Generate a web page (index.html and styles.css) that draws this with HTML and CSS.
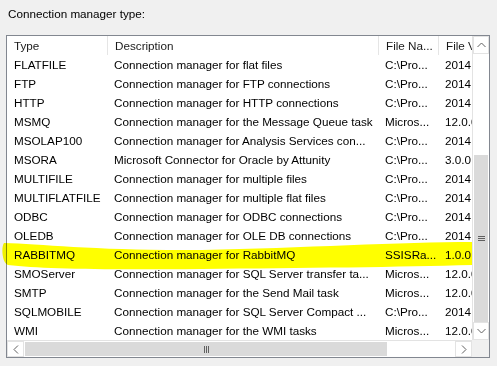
FILE: index.html
```html
<!DOCTYPE html>
<html lang="en">
<head>
    <meta charset="UTF-8">
    <title>Connection manager type</title>
    <link rel="stylesheet" href="styles.css">
</head>
<body>
    <div class="dialog">
        <div class="caption">Connection manager type:</div>
        <div class="listbox">
            <div class="viewport">
                <div class="row header">
                    <div class="cell">Type</div>
                    <div class="cell">Description</div>
                    <div class="cell">File Na...</div>
                    <div class="cell">File Version</div>
                </div>
                <div id="rows"></div>
            </div>
            <div class="vscroll">
                <div class="arrow">
                    <svg width="9" height="6" viewBox="0 0 9 6"><polyline points="0.5,5 4.5,1 8.5,5" /></svg>
                </div>
                <div class="vtrack">
                    <div class="vthumb"><span class="grip-h"></span></div>
                </div>
                <div class="arrow">
                    <svg width="9" height="6" viewBox="0 0 9 6"><polyline points="0.5,1 4.5,5 8.5,1" /></svg>
                </div>
            </div>
            <div class="hscroll">
                <div class="arrow">
                    <svg width="6" height="9" viewBox="0 0 6 9"><polyline points="5,0.5 1,4.5 5,8.5" /></svg>
                </div>
                <div class="htrack">
                    <div class="hthumb"><span class="grip-v"></span></div>
                </div>
                <div class="arrow">
                    <svg width="6" height="9" viewBox="0 0 6 9"><polyline points="1,0.5 5,4.5 1,8.5" /></svg>
                </div>
            </div>
            <div class="corner"></div>

            <!-- marker stroke drawn over the RabbitMQ row -->
            <svg class="marker" width="484" height="40" viewBox="0 0 484 40">
                <path d="M2,5 C40,6 100,13 200,12 C300,10 400,4 470,4 L470,27 C400,29 300,30 200,31 C100,32 40,31 6,27 C0,25 -1,9 2,5 Z" />
            </svg>
        </div>
    </div>

    <script>
        const rows = [
            ['FLATFILE', 'Connection manager for flat files', 'C:\\Pro...', '2014.0.2430.0'],
            ['FTP', 'Connection manager for FTP connections', 'C:\\Pro...', '2014.0.2430.0'],
            ['HTTP', 'Connection manager for HTTP connections', 'C:\\Pro...', '2014.0.2430.0'],
            ['MSMQ', 'Connection manager for the Message Queue task', 'Micros...', '12.0.0.0'],
            ['MSOLAP100', 'Connection manager for Analysis Services con...', 'C:\\Pro...', '2014.0.2430.0'],
            ['MSORA', 'Microsoft Connector for Oracle by Attunity', 'C:\\Pro...', '3.0.0.0'],
            ['MULTIFILE', 'Connection manager for multiple files', 'C:\\Pro...', '2014.0.2430.0'],
            ['MULTIFLATFILE', 'Connection manager for multiple flat files', 'C:\\Pro...', '2014.0.2430.0'],
            ['ODBC', 'Connection manager for ODBC connections', 'C:\\Pro...', '2014.0.2430.0'],
            ['OLEDB', 'Connection manager for OLE DB connections', 'C:\\Pro...', '2014.0.2430.0'],
            ['RABBITMQ', 'Connection manager for RabbitMQ', 'SSISRa...', '1.0.0.0'],
            ['SMOServer', 'Connection manager for SQL Server transfer ta...', 'Micros...', '12.0.0.0'],
            ['SMTP', 'Connection manager for the Send Mail task', 'Micros...', '12.0.0.0'],
            ['SQLMOBILE', 'Connection manager for SQL Server Compact ...', 'C:\\Pro...', '2014.0.2430.0'],
            ['WMI', 'Connection manager for the WMI tasks', 'Micros...', '12.0.0.0']
        ];

        document.getElementById('rows').innerHTML = rows.map(r => `
            <div class="row">
                ${r.map(text => `<div class="cell">${text}</div>`).join('')}
            </div>
        `).join('');
    </script>
</body>
</html>
```

FILE: styles.css
```css
body {
    margin: 0;
    background-color: #f0f0f0;
    font-family: "Liberation Sans", Arial, sans-serif;
    font-size: 11.7px;
    color: #000;
}
.dialog {
    padding: 6px 0 0 6px;
}
.caption {
    height: 15px;
    line-height: 15px;
    padding-left: 2px;
    margin-bottom: 14px;
}
.listbox {
    position: relative;
    width: 482px;
    height: 321px;
    border: 1px solid #828790;
    background-color: #fff;
    display: grid;
    grid-template-columns: 465px 17px;
    grid-template-rows: 304px 17px;
}
.viewport {
    overflow: hidden;
}
.row {
    display: grid;
    grid-template-columns: 101px 271px 60px 100px;
    height: 19px;
    align-items: center;
}
.row.header {
    align-items: stretch;
}
.cell {
    padding-left: 6px;
    white-space: nowrap;
    overflow: hidden;
}
.row:not(.header) .cell:first-child {
    padding-left: 7px;
}
.header .cell {
    display: flex;
    align-items: center;
    border-right: 1px solid #e5e5e5;
    padding-left: 7px;
    color: #1a1a1a;
}

/* scrollbars */
.vscroll {
    display: flex;
    flex-direction: column;
    background-color: #f5f5f5;
    border-left: 1px solid #e3e3e3;
}
.arrow {
    flex: 0 0 17px;
    display: flex;
    align-items: center;
    justify-content: center;
    background-color: #fff;
    border: 1px solid #e3e3e3;
    box-sizing: border-box;
}
.vscroll .arrow {
    flex-basis: 18px;
}
.arrow svg polyline {
    fill: none;
    stroke: #606060;
    stroke-width: 1;
}
.vtrack {
    flex: 1;
    background-color: #fff;
    padding: 101px 1px 0 1px;
}
.vthumb {
    height: 167px;
    background-color: #dadada;
    display: flex;
    align-items: center;
    justify-content: center;
}
.grip-h {
    width: 7px;
    height: 5px;
    border-top: 1px solid #606060;
    border-bottom: 1px solid #606060;
    position: relative;
    box-sizing: border-box;
}
.grip-h::after {
    content: "";
    position: absolute;
    left: 0;
    right: 0;
    top: 1px;
    border-top: 1px solid #606060;
}
.hscroll {
    display: flex;
    background-color: #fff;
    border-top: 1px solid #e3e3e3;
}
.htrack {
    flex: 1;
    padding: 1px 68px 1px 1px;
}
.hthumb {
    height: 100%;
    background-color: #dadada;
    display: flex;
    align-items: center;
    justify-content: center;
}
.grip-v {
    width: 5px;
    height: 7px;
    border-left: 1px solid #606060;
    border-right: 1px solid #606060;
    position: relative;
    box-sizing: border-box;
}
.grip-v::after {
    content: "";
    position: absolute;
    top: 0;
    bottom: 0;
    left: 1px;
    border-left: 1px solid #606060;
}
.corner {
    background-color: #f0f0f0;
}

.marker {
    position: absolute;
    left: -5px;
    top: 202px;
    mix-blend-mode: multiply;
    pointer-events: none;
}
.marker path {
    fill: #ffff00;
}
```
